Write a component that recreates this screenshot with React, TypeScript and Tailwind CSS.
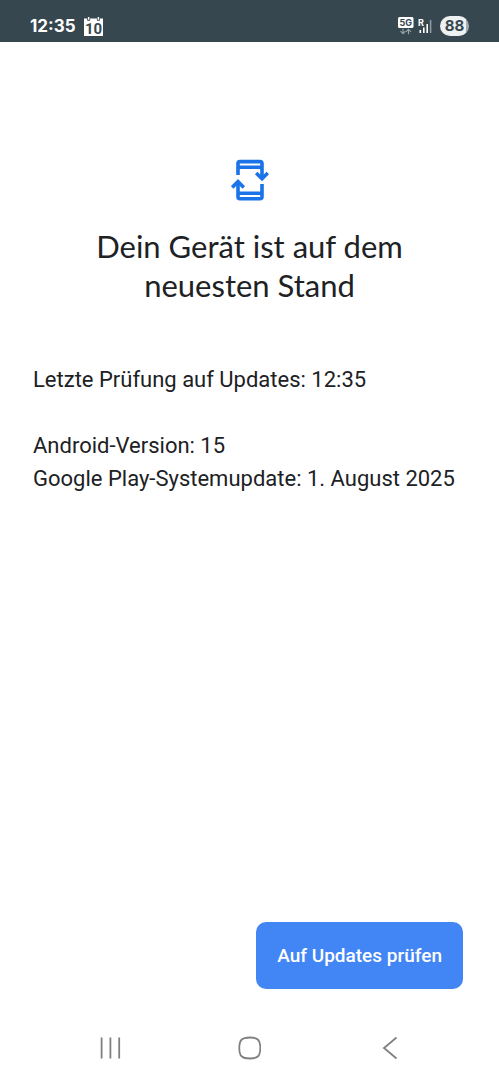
function StatusBar() {
  return (
    <header className="flex h-[42px] items-center justify-between bg-[#37474f] px-[30px] pt-[10px] text-white">
      <div className="flex items-center gap-2">
        <time className="font-['Inter',sans-serif] text-[17px] leading-6 font-bold">12:35</time>
        <CalendarIcon day="10" />
      </div>
      <div className="flex items-center gap-1">
        <NetworkIcon />
        <SignalIcon />
        <Battery level={88} />
      </div>
    </header>
  );
}

function CalendarIcon({ day }: { day: string }) {
  return (
    <svg width="19" height="19" viewBox="0 0 19 19" role="img" aria-label="Kalender">
      <path d="M0 1.5h3.2v2.2h2.9V1.5h6.8v2.2h2.9V1.5H19V19H0z" fill="#fff" />
      <path d="M3.9 0h1.5v2.8H3.9zM13.6 0h1.5v2.8h-1.5z" fill="#fff" />
      <text
        x="9.5"
        y="16.5"
        textAnchor="middle"
        fill="#37474f"
        fontFamily="Roboto, sans-serif"
        fontSize="15"
        fontWeight="700"
      >
        {day}
      </text>
    </svg>
  );
}

function NetworkIcon() {
  return (
    <svg width="16" height="18" viewBox="0 0 16 18" role="img" aria-label="Mobilfunk">
      <rect width="15.5" height="11" rx="1.5" fill="#fff" />
      <text
        x="7.75"
        y="8.8"
        textAnchor="middle"
        fill="#37474f"
        fontFamily="Inter, sans-serif"
        fontSize="9"
        fontWeight="700"
      >
        5G
      </text>
      <g fill="none" stroke="#9ba5a9" strokeWidth="1.1">
        <path d="M5 11.8v5M2.5 14.2 5 16.8l2.5-2.6" />
        <path d="M10.5 17.2v-5M8 14.8l2.5-2.6 2.5 2.6" />
      </g>
    </svg>
  );
}

function SignalIcon() {
  return (
    <svg width="14" height="16" viewBox="0 0 14 16" role="img" aria-label="Signal">
      <text x="0" y="7.5" fill="#fff" fontFamily="Inter, sans-serif" fontSize="9" fontWeight="700">
        R
      </text>
      <path d="M1.5 12h1.6v3H1.5zM5 9.5h1.6V15H5zM8.4 6H10v9H8.4z" fill="#fff" />
      <path d="M11.8 2h1.6v13h-1.6z" fill="#8f9a9f" />
    </svg>
  );
}

function Battery({ level }: { level: number }) {
  return (
    <span className="ml-1 flex h-5 w-[29px] items-center justify-center rounded-full bg-linear-to-r from-[#eef1f2] from-88% to-[#a3acb0] to-88% font-['Inter',sans-serif] text-[15px] leading-5 font-bold text-[#37474f]">
      {level}
    </span>
  );
}

function UpdateIcon() {
  return (
    <svg
      className="mx-auto"
      width="38"
      height="42"
      viewBox="0 0 38 42"
      fill="none"
      stroke="#1a73e8"
      strokeWidth="3.6"
      aria-hidden="true"
    >
      <path d="M7 16V4.6a2 2 0 0 1 2-2h20a2 2 0 0 1 2 2V20" />
      <path d="M7 8.2h24M7 34.2h24" />
      <path d="M31 25v12.8a2 2 0 0 1-2 2H9a2 2 0 0 1-2-2V22.5" />
      <path d="m25.2 14 5.8 5.8 5.8-5.8M1.2 28.4 7 22.6l5.8 5.8" />
    </svg>
  );
}

function NavigationBar() {
  const button = "flex h-12 w-12 items-center justify-center";
  return (
    <nav className="flex h-16 items-center justify-around px-10 text-[#808080]">
      <button type="button" aria-label="Letzte Apps" className={button}>
        <svg width="24" height="24" viewBox="0 0 24 24" stroke="currentColor" strokeWidth="1.8">
          <path d="M3.6 1.5v21M12.4 1.5v21M21.2 1.5v21" />
        </svg>
      </button>
      <button type="button" aria-label="Startbildschirm" className={button}>
        <svg width="24" height="24" viewBox="0 0 24 24" fill="none" stroke="currentColor" strokeWidth="1.8">
          <path d="M12.8 1.5c8 0 10.5 2.5 10.5 10.5s-2.5 10.5-10.5 10.5S2.3 20 2.3 12 4.8 1.5 12.8 1.5z" />
        </svg>
      </button>
      <button type="button" aria-label="Zurück" className={button}>
        <svg width="24" height="24" viewBox="0 0 24 24" fill="none" stroke="currentColor" strokeWidth="1.8">
          <path d="M19.5 1.5 7 12l12.5 10.5" />
        </svg>
      </button>
    </nav>
  );
}

export default function App() {
  return (
    <div className="flex min-h-screen flex-col bg-white font-['Roboto',sans-serif] text-[#202124]">
      <StatusBar />
      <main className="flex grow flex-col px-[33px] pt-[117px] pb-[27px]">
        <UpdateIcon />
        <h1 className="mx-auto mt-[26px] max-w-[340px] text-center font-['Lato',sans-serif] text-[31px] leading-[39px]">
          Dein Gerät ist auf dem neuesten Stand
        </h1>
        <div className="mt-[58px] text-[22px] leading-[33px]">
          <p>Letzte Prüfung auf Updates: 12:35</p>
          <p className="mt-[33px]">Android-Version: 15</p>
          <p>Google Play-Systemupdate: 1. August 2025</p>
        </div>
        <button
          type="button"
          className="mt-auto mr-[3px] self-end rounded-[10px] bg-[#4285f4] px-[21px] py-5 text-[19px] leading-[27px] font-medium text-white"
        >
          Auf Updates prüfen
        </button>
      </main>
      <NavigationBar />
    </div>
  );
}
